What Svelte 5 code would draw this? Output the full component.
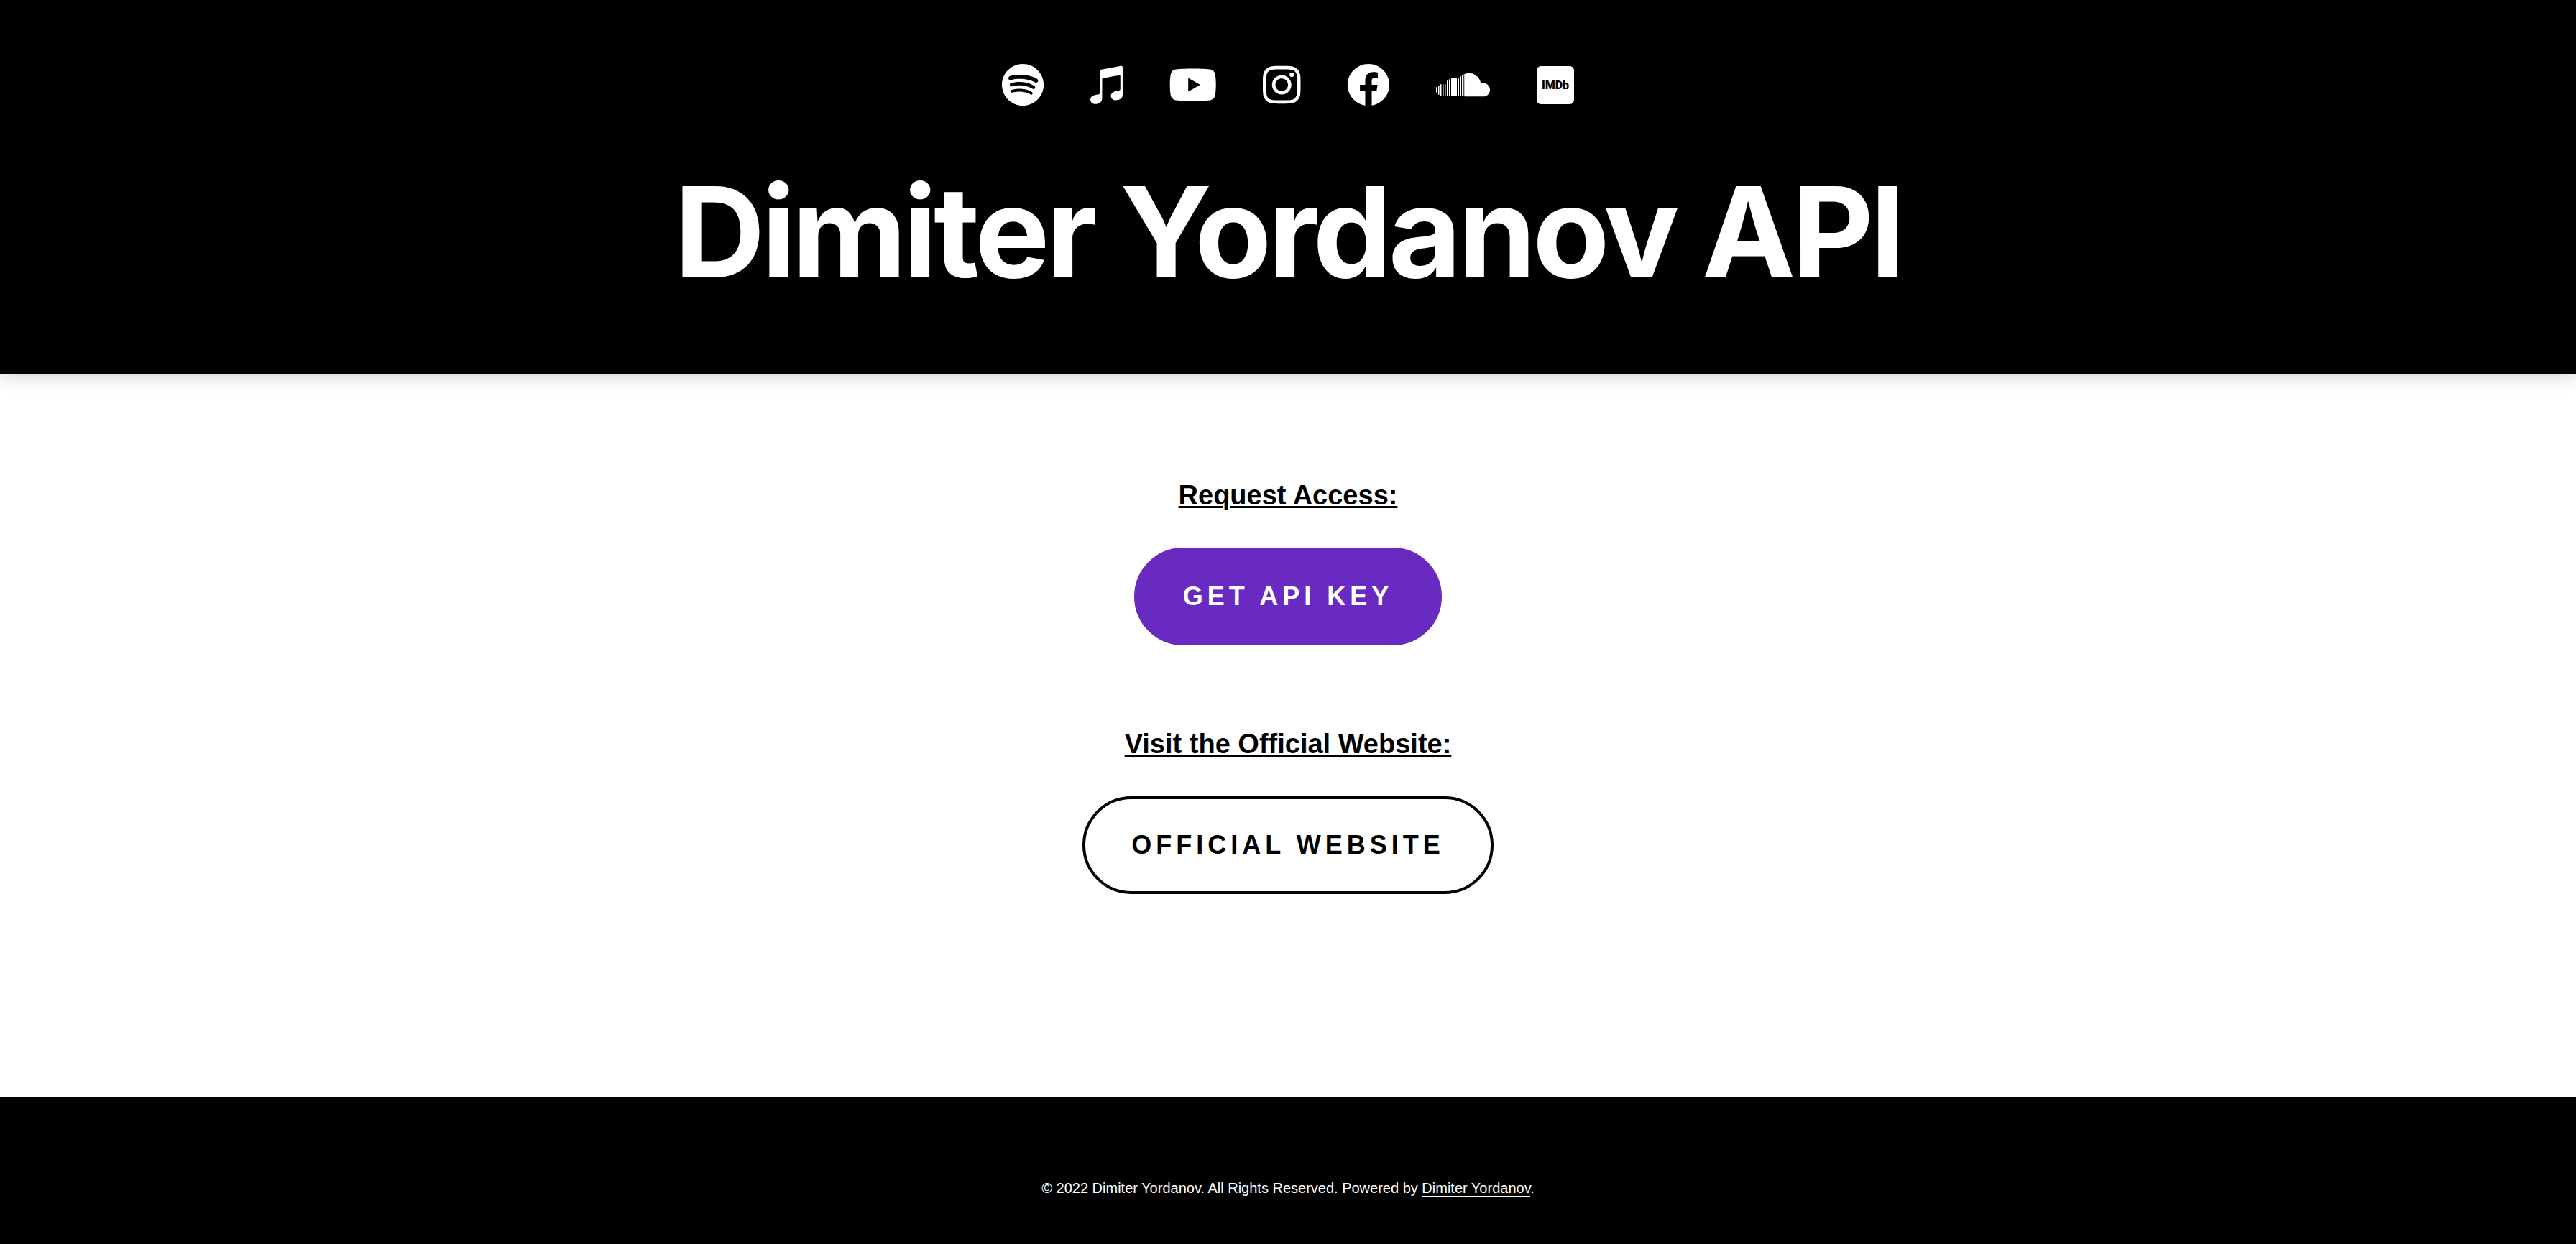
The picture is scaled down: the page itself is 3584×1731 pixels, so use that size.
<script>
  const bars = [
    [0, 33, 8], [3, 31, 13], [6, 29, 17], [9, 29, 17], [12, 29, 17], [15, 24, 22], [18, 22, 24],
    [21, 20, 26], [24, 20, 26], [27, 20, 26], [30, 21, 25], [33, 18, 28], [36, 16, 30]
  ];
  const icons = [
    { name: 'Spotify', w: 496, d: 'M248 8C111.1 8 0 119.1 0 256s111.1 248 248 248 248-111.1 248-248S384.9 8 248 8zm100.7 364.9c-4.2 0-6.8-1.3-10.7-3.6-62.4-37.6-135-39.2-206.7-24.5-3.9 1-9 2.6-11.9 2.6-9.7 0-15.8-7.7-15.8-15.8 0-10.3 6.1-15.2 13.6-16.8 81.9-18.1 165.6-16.5 237 26.2 6.1 3.9 9.7 7.4 9.7 16.5s-7.1 15.4-15.2 15.4zm26.9-65.6c-5.2 0-8.7-2.3-12.3-4.2-62.5-37-155.7-51.9-238.6-29.4-4.8 1.3-7.4 2.6-11.9 2.6-10.7 0-19.4-8.7-19.4-19.4s5.2-17.8 15.5-20.7c27.8-7.8 56.2-13.6 97.8-13.6 64.9 0 127.6 16.1 177 45.5 8.1 4.8 11.3 11 11.3 19.7-.1 10.8-8.5 19.5-19.4 19.5zm31-76.2c-5.2 0-8.4-1.3-12.9-3.9-71.2-42.5-198.5-52.7-280.9-29.7-3.6 1-8.1 2.6-12.9 2.6-13.2 0-23.3-10.3-23.3-23.6 0-13.6 8.4-21.3 17.4-23.9 35.2-10.3 74.6-15.2 117.5-15.2 73 0 149.5 15.2 205.4 47.8 7.8 4.5 12.9 10.7 12.9 22.6 0 13.6-11 23.3-23.2 23.3z' },
    { name: 'Apple Music', w: 384, d: 'M381.9 388.2c-6.4 27.4-27.2 42.8-55.1 48-24.5 4.5-44.9 5.6-64.5-10.2-23.9-20.1-24.2-53.4-2.7-74.4 17-16.2 40.9-19.5 76.8-25.8 6-1.1 11.2-2.5 15.6-7.4 6.4-7.2 4.4-4.1 4.4-163.2 0-11.2-5.5-14.3-17-12.3-8.2 1.4-185.7 34.6-185.7 34.6-10.2 2.2-13.4 5.2-13.4 16.7 0 234.7 1.1 223.9-2.5 239.5-4.2 18.2-15.4 31.9-30.2 39.5-16.8 9.3-47.2 13.4-63.4 10.4-43.2-8.1-58.4-58-29.1-86.6 17-16.2 40.9-19.5 76.8-25.8 6-1.1 11.2-2.5 15.6-7.4 10.1-11.5 1.8-256.6 5.2-270.2.8-5.2 3-9.6 7.1-12.9 4.2-3.5 11.8-5.5 13.4-5.5 204-38.2 228.9-43.1 232.4-43.1 11.5-.8 18.1 6 18.1 17.6.2 344.5 1.1 326-1.8 338.5z' },
    { name: 'YouTube', w: 576, d: 'M549.655 124.083c-6.281-23.65-24.787-42.276-48.284-48.597C458.781 64 288 64 288 64S117.22 64 74.629 75.486c-23.497 6.322-42.003 24.947-48.284 48.597-11.412 42.867-11.412 132.305-11.412 132.305s0 89.438 11.412 132.305c6.281 23.65 24.787 41.5 48.284 47.821C117.22 448 288 448 288 448s170.78 0 213.371-11.486c23.497-6.321 42.003-24.171 48.284-47.821 11.412-42.867 11.412-132.305 11.412-132.305s0-89.438-11.412-132.305zm-317.51 213.508V175.185l142.739 81.205-142.739 81.201z' },
    { name: 'Instagram', w: 448, d: 'M224.1 141c-63.6 0-114.9 51.3-114.9 114.9s51.3 114.9 114.9 114.9S339 319.5 339 255.9 287.7 141 224.1 141zm0 189.6c-41.1 0-74.7-33.5-74.7-74.7s33.5-74.7 74.7-74.7 74.7 33.5 74.7 74.7-33.6 74.7-74.7 74.7zm146.4-194.3c0 14.9-12 26.8-26.8 26.8-14.9 0-26.8-12-26.8-26.8s12-26.8 26.8-26.8 26.8 12 26.8 26.8zm76.1 27.2c-1.7-35.9-9.9-67.7-36.2-93.9-26.2-26.2-58-34.4-93.9-36.2-37-2.1-147.9-2.1-184.9 0-35.8 1.7-67.6 9.9-93.9 36.1s-34.4 58-36.2 93.9c-2.1 37-2.1 147.9 0 184.9 1.7 35.9 9.9 67.7 36.2 93.9s58 34.4 93.9 36.2c37 2.1 147.9 2.1 184.9 0 35.9-1.7 67.7-9.9 93.9-36.2 26.2-26.2 34.4-58 36.2-93.9 2.1-37 2.1-147.8 0-184.8zM398.8 388c-7.8 19.6-22.9 34.7-42.6 42.6-29.5 11.7-99.5 9-132.1 9s-102.7 2.6-132.1-9c-19.6-7.8-34.7-22.9-42.6-42.6-11.7-29.5-9-99.5-9-132.1s-2.6-102.7 9-132.1c7.8-19.6 22.9-34.7 42.6-42.6 29.5-11.7 99.5-9 132.1-9s102.7-2.6 132.1 9c19.6 7.8 34.7 22.9 42.6 42.6 11.7 29.5 9 99.5 9 132.1s2.7 102.7-9 132.1z' },
    { name: 'Facebook', w: 512, d: 'M504 256C504 119 393 8 256 8S8 119 8 256c0 123.78 90.69 226.38 209.25 245V327.69h-63V256h63v-54.64c0-62.15 37-96.48 93.67-96.48 27.14 0 55.52 4.84 55.52 4.84v61h-31.28c-30.8 0-40.41 19.12-40.41 38.73V256h68.78l-11 71.69h-57.78V501C413.31 482.38 504 379.78 504 256z' }
  ];
</script>

<header>
  <nav aria-label="Social links">
    {#each icons as icon}
      <a href="#{icon.name}" aria-label={icon.name}>
        <svg viewBox="0 0 {icon.w} 512" aria-hidden="true"><path d={icon.d} /></svg>
      </a>
    {/each}
    <a href="#soundcloud" aria-label="SoundCloud">
      <svg viewBox="0 0 76 60" aria-hidden="true">
        {#each bars as [x, y, h], i}
          <rect {x} {y} width={i < 5 ? 1.5 : 2} height={h} rx=".8" />
        {/each}
        <rect x="38.600" y="15" width="1.600" height="31" opacity=".75" />
        <path d="M40 46.300V14.900A16.300 16.300 0 0 1 62.200 28.400 9.300 9.300 0 1 1 65.700 46.300Z" />
      </svg>
    </a>
    <a href="#imdb" aria-label="IMDb">
      <svg viewBox="0 0 52 60" aria-hidden="true">
        <rect y="4" width="52" height="53" rx="6" />
        <text x="26" y="36" text-anchor="middle">IMDb</text>
      </svg>
    </a>
  </nav>
  <h1>Dimiter Yordanov API</h1>
</header>

<main>
  <section>
    <h2>Request Access:</h2>
    <a class="button primary" href="#key">GET API KEY</a>
  </section>
  <section>
    <h2>Visit the Official Website:</h2>
    <a class="button" href="#website">OFFICIAL WEBSITE</a>
  </section>
</main>

<footer>
  <p>© 2022 Dimiter Yordanov. All Rights Reserved. Powered by <a href="#author">Dimiter Yordanov</a>.</p>
</footer>

<style>
  :global(body) {
    background: #fff;
  }
  :global(#app) {
    display: flex;
    flex-direction: column;
    min-height: 100vh;
    font-family: "Liberation Sans", Arial, sans-serif;
  }
  header {
    position: relative;
    display: flex;
    flex-direction: column;
    align-items: center;
    gap: 64px;
    padding: 88px 40px;
    background: #000;
    color: #fff;
    box-shadow: 0 4px 24px rgba(0, 0, 0, 0.17);
  }
  nav {
    display: flex;
    flex-wrap: wrap;
    justify-content: center;
    gap: 64px;
  }
  nav a {
    display: block;
  }
  svg {
    display: block;
    height: 60px;
    fill: #fff;
  }
  svg text {
    fill: #000;
    font: 900 16px Roboto, sans-serif;
  }
  h1 {
    margin: 0;
    font: 700 175px/220px Inter, sans-serif;
    letter-spacing: -5px;
    text-align: center;
  }
  main {
    flex: 1;
    display: flex;
    flex-direction: column;
    align-items: center;
    gap: 112px;
    padding: 144px 40px;
  }
  section {
    display: flex;
    flex-direction: column;
    align-items: center;
    gap: 48px;
  }
  h2 {
    margin: 0;
    font-size: 38px;
    line-height: 50px;
    text-align: center;
    text-decoration: underline;
    text-decoration-thickness: 3px;
  }
  .button {
    border: 4px solid #000;
    border-radius: 68px;
    padding: 43px 64px;
    color: #000;
    font-size: 36px;
    font-weight: 700;
    line-height: 42px;
    letter-spacing: 6px;
    text-decoration: none;
  }
  .primary {
    border-color: #682ac1;
    background: #682ac1;
    color: #fff;
  }
  footer {
    padding: 110px 40px 62px;
    background: #000;
    color: #fff;
    text-align: center;
  }
  p {
    margin: 0;
    font-size: 20px;
    line-height: 32px;
  }
  p a {
    border-bottom: 2px solid #fff;
    color: inherit;
    text-decoration: none;
  }
</style>
